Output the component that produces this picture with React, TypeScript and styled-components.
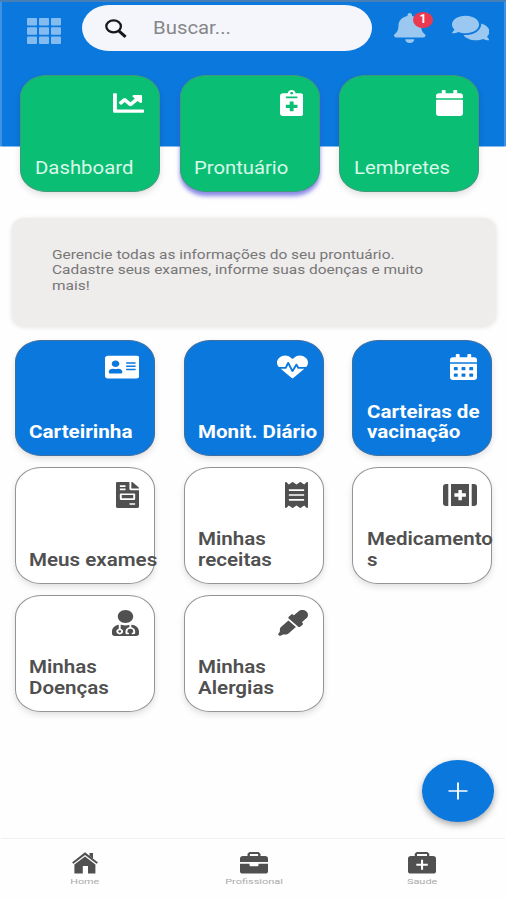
import React from "react";
import styled, { createGlobalStyle } from "styled-components";
import type { IconType } from "react-icons";
import {
  FaBell, FaComments, FaChartLine, FaNotesMedical, FaCalendar, FaAddressCard,
  FaHeartbeat, FaCalendarAlt, FaFileInvoice, FaReceipt, FaUserMd, FaEyeDropper,
} from "react-icons/fa";

const BLUE = "#0b78dd";
const GREEN = "#0abf74";
const INK = "#505050";

const GlobalStyle = createGlobalStyle`
  * { box-sizing: border-box; }
  body { margin: 0; background: #fefefe; font-family: Roboto, "Liberation Sans", sans-serif; }
`;

const Screen = styled.div`
  width: 506px;
  height: 900px;
  display: flex;
  flex-direction: column;
  overflow: hidden;
  position: relative;
  background: #fefefe;
`;

const Header = styled.header`
  height: 218px;
  border-top: 2px solid #467eb5;
  background: linear-gradient(90deg, #3d92e4 2px, ${BLUE} 2px, ${BLUE} 504px, #3d92e4 504px) 0 0 / 100% 144.5px no-repeat;
`;

const TopBar = styled.div`
  display: flex;
  align-items: flex-start;
  height: 73px;
  padding: 3px 17px 0 26.5px;
`;

const Glyph = styled.span<{ $w: number; $h: number; $color?: string }>`
  display: block;
  flex: none;
  width: ${(p) => p.$w}px;
  height: ${(p) => p.$h}px;
  color: ${(p) => p.$color ?? "inherit"};
  svg { display: block; width: 100%; height: 100%; }
`;

const MenuButton = styled.div`
  margin: 13px 21.5px 0 0;
`;

const SearchField = styled.div`
  display: flex;
  align-items: center;
  width: 292px;
  height: 46px;
  padding-left: 23px;
  border-radius: 27px / 23px;
  background: #f4f6fb;
`;

const Stretch = styled.span<{ $x: number; $center?: boolean }>`
  display: block;
  white-space: nowrap;
  transform: scaleX(${(p) => p.$x});
  transform-origin: ${(p) => (p.$center ? "center" : "left")};
`;

const Placeholder = styled.div`
  margin: 0 0 1px 26px;
  font-size: 18px;
  color: #858789;
`;

const BellButton = styled.div`
  position: relative;
  margin: 8px 0 0 22px;
`;

const Badge = styled.span`
  position: absolute;
  left: 19px;
  top: -1px;
  width: 20px;
  height: 16px;
  border-radius: 50%;
  background: #ea3a52;
  color: #fff;
  font-size: 12px;
  font-weight: 700;
  line-height: 15px;
  text-align: center;
`;

const ChatButton = styled.div`
  margin: 9px 0 0 26px;
`;

const QuickRow = styled.div`
  display: flex;
  gap: 19.5px;
  padding-left: 20px;
`;

type Tone = "green" | "blue" | "white";
const fills: Record<Tone, string> = { green: GREEN, blue: BLUE, white: "#fff" };
const borders: Record<Tone, string> = { green: "#3f9a7c", blue: "#3e6f9f", white: "#949494" };

const CardBox = styled.div<{ $tone: Tone; $active?: boolean }>`
  display: flex;
  flex-direction: column;
  justify-content: space-between;
  width: 140px;
  height: 116.5px;
  padding: 13.5px ${(p) => (p.$tone === "green" ? 15.5 : 14.5)}px 12.5px 13.5px;
  border: 1px solid ${(p) => borders[p.$tone]};
  border-radius: 26px / 22px;
  background: ${(p) => fills[p.$tone]};
  color: ${(p) => (p.$tone === "white" ? INK : "#fff")};
  box-shadow: ${(p) => (p.$active ? "0 4px 4px rgba(72,72,215,.65)" : "0 3px 6px rgba(0,0,0,.12)")};
  ${Glyph} { align-self: flex-end; }
`;

const CardLabel = styled.div<{ $tone: Tone }>`
  font-size: ${(p) => (p.$tone === "green" ? 18 : 17.5)}px;
  font-weight: ${(p) => (p.$tone === "green" ? 400 : p.$tone === "blue" ? 700 : 600)};
  line-height: 20.5px;
  color: ${(p) => (p.$tone === "green" ? "#d9f8e9" : "inherit")};
`;

const Info = styled.section`
  flex: none;
  width: 484px;
  height: 108px;
  margin-left: 12px;
  padding: 28.5px 0 0 40px;
  border-radius: 13px / 11px;
  background: #efecec;
  box-shadow: 0 1px 5px rgba(0, 0, 0, 0.12);
  font-size: 13px;
  line-height: 15.5px;
  color: #777;
`;

const ServiceGrid = styled.main`
  flex: 1;
  display: grid;
  grid-template-columns: repeat(3, 168.75px);
  grid-auto-rows: 127.75px;
  padding: 13.5px 0 0 14.75px;
`;

const Fab = styled.button`
  position: absolute;
  left: 422px;
  top: 760px;
  width: 72px;
  height: 61.5px;
  display: grid;
  place-items: center;
  padding: 0;
  border: 0;
  border-radius: 50%;
  background: ${BLUE};
  box-shadow: 0 3px 7px rgba(0, 0, 0, 0.34);
`;

const TabBar = styled.nav`
  display: grid;
  grid-template-columns: repeat(3, 168.5px);
  height: 62.5px;
  margin: 0 1px;
  border-top: 1.5px solid #f0f0f0;
`;

const Tab = styled.div`
  display: flex;
  flex-direction: column;
  align-items: center;
  padding-top: 13.5px;
  color: ${INK};
`;

const TabLabel = styled.div`
  margin-top: 3px;
  font-size: 8px;
  line-height: 10px;
  color: #aaa;
`;

const MenuIcon = () => (
  <svg viewBox="0 0 34 26" fill="currentColor">
    {[0, 9.2, 18.4].map((y) =>
      [0, 12, 24].map((x) => <rect key={`${x}-${y}`} x={x} y={y} width="10" height="7.5" rx="1" />),
    )}
  </svg>
);

const SearchIcon = () => (
  <svg viewBox="0 0 22 19" fill="none" stroke="currentColor">
    <ellipse cx="8.6" cy="7.3" rx="7.300" ry="6" strokeWidth="2.300" />
    <path d="M13.800 11.800 20.600 17.800" strokeWidth="3" />
  </svg>
);

const FirstAidIcon = () => (
  <svg viewBox="0 0 34 26" fill="currentColor">
    <path d="M5.3 2H3Q0 2 0 5v16q0 3 3 3h2.3zM28.7 2H31q3 0 3 3v16q0 3-3 3h-2.3z" />
    <path fillRule="evenodd" d="M8 2h18v22H8zm7.400 6v3.300h-4v3.500h4v3.400h3.500v-3.400h4v-3.500h-4V8z" />
  </svg>
);

interface CardData {
  lines: string[];
  icon: IconType | typeof FirstAidIcon;
  width: number;
  stretch: number;
  active?: boolean;
}

const quick: CardData[] = [
  { lines: ["Dashboard"], icon: FaChartLine, width: 31, stretch: 1.13 },
  { lines: ["Prontuário"], icon: FaNotesMedical, width: 23.3, stretch: 1.125, active: true },
  { lines: ["Lembretes"], icon: FaCalendar, width: 27, stretch: 1.125 },
];

const services: (CardData & { tone: Tone })[] = [
  { tone: "blue", lines: ["Carteirinha"], icon: FaAddressCard, width: 34.5, stretch: 1.18 },
  { tone: "blue", lines: ["Monit. Diário"], icon: FaHeartbeat, width: 31, stretch: 1.175 },
  { tone: "blue", lines: ["Carteiras de", "vacinação"], icon: FaCalendarAlt, width: 27, stretch: 1.175 },
  { tone: "white", lines: ["Meus exames"], icon: FaFileInvoice, width: 23, stretch: 1.175 },
  { tone: "white", lines: ["Minhas", "receitas"], icon: FaReceipt, width: 23, stretch: 1.175 },
  { tone: "white", lines: ["Medicamento", "s"], icon: FirstAidIcon, width: 34, stretch: 1.17 },
  { tone: "white", lines: ["Minhas", "Doenças"], icon: FaUserMd, width: 27, stretch: 1.175 },
  { tone: "white", lines: ["Minhas", "Alergias"], icon: FaEyeDropper, width: 30, stretch: 1.175 },
];

function Card({ data, tone }: { data: CardData; tone: Tone }) {
  const Icon = data.icon as React.ComponentType<{ preserveAspectRatio?: string }>;
  return (
    <CardBox $tone={tone} $active={data.active}>
      <Glyph $w={data.width} $h={26}><Icon preserveAspectRatio="none" /></Glyph>
      <CardLabel $tone={tone}>
        {data.lines.map((line) => <Stretch key={line} $x={data.stretch}>{line}</Stretch>)}
      </CardLabel>
    </CardBox>
  );
}

const HomeIcon = () => (
  <svg viewBox="0 0 26 22" fill="currentColor">
    <path d="M17.5 1H21v5.8l-3.5-3z" />
    <path d="M13 .2 26 10.4l-1.4 1.4L13 2.9 1.4 11.8 0 10.4z" />
    <path d="M13 4.4 23.4 12.4V21.6H16V14h-5.2v7.6H2.4v-9.2z" />
  </svg>
);

const BriefcaseIcon = () => (
  <svg viewBox="0 0 28 22" fill="currentColor">
    <path fillRule="evenodd" d="M9.5 0h9l2 1.8v2.1H25q3 0 3 2.6V10H0V6.5q0-2.6 3-2.6h4.5V1.8zm.4 2v1.9h8.2V2z" />
    <path d="M0 11.7h9.5v1.5q0 1 1.2 1h6.6q1.2 0 1.2-1v-1.5H28v7.6q0 2.3-2.7 2.3H2.7Q0 21.6 0 19.3z" />
  </svg>
);

const MedkitIcon = () => (
  <svg viewBox="0 0 28 22" fill="currentColor">
    <path fillRule="evenodd" d="M8.7 0h10.6l2 1.8v2.1H25q3 0 3 2.6v12.8q0 2.3-2.7 2.3H2.7Q0 21.6 0 19.3V6.5q0-2.6 3-2.6h3.7V1.8zm.3 1.9v2h10v-2zM13 7.8v4H8.3v2H13v4h2.1v-4h4.7v-2h-4.7v-4z" />
  </svg>
);

const tabs = [
  { label: "Home", icon: <HomeIcon />, width: 26, stretch: 1.35 },
  { label: "Profissional", icon: <BriefcaseIcon />, width: 28, stretch: 1.37 },
  { label: "Saude", icon: <MedkitIcon />, width: 28, stretch: 1.37 },
];

const intro = [
  "Gerencie todas as informações do seu prontuário.",
  "Cadastre seus exames, informe suas doenças e muito",
  "mais!",
];

export default function App() {
  return (
    <>
      <GlobalStyle />
      <Screen>
        <Header>
          <TopBar>
            <MenuButton>
              <Glyph $w={34} $h={26} $color="#85bcf0"><MenuIcon /></Glyph>
            </MenuButton>
            <SearchField>
              <Glyph $w={22} $h={19} $color="#15171a"><SearchIcon /></Glyph>
              <Placeholder><Stretch $x={1.13}>Buscar...</Stretch></Placeholder>
            </SearchField>
            <BellButton>
              <Glyph $w={31.5} $h={30} $color="#9bc8f0"><FaBell preserveAspectRatio="none" /></Glyph>
              <Badge>1</Badge>
            </BellButton>
            <ChatButton>
              <Glyph $w={37.5} $h={28} $color="#9bc8f0"><FaComments preserveAspectRatio="none" /></Glyph>
            </ChatButton>
          </TopBar>
          <QuickRow>
            {quick.map((item) => <Card key={item.lines[0]} data={item} tone="green" />)}
          </QuickRow>
        </Header>
        <Info>
          {intro.map((line) => <Stretch key={line} $x={1.188}>{line}</Stretch>)}
        </Info>
        <ServiceGrid>
          {services.map((item) => <Card key={item.lines.join(" ")} data={item} tone={item.tone} />)}
        </ServiceGrid>
        <TabBar>
          {tabs.map((tab) => (
            <Tab key={tab.label}>
              <Glyph $w={tab.width} $h={22}>{tab.icon}</Glyph>
              <TabLabel><Stretch $x={tab.stretch} $center>{tab.label}</Stretch></TabLabel>
            </Tab>
          ))}
        </TabBar>
        <Fab aria-label="Adicionar">
          <svg width="20" height="18" viewBox="0 0 20 18" stroke="#fff" fill="none">
            <path d="M.5 9h19" strokeWidth="1.5" />
            <path d="M10 .5v17" strokeWidth="1.9" />
          </svg>
        </Fab>
      </Screen>
    </>
  );
}
